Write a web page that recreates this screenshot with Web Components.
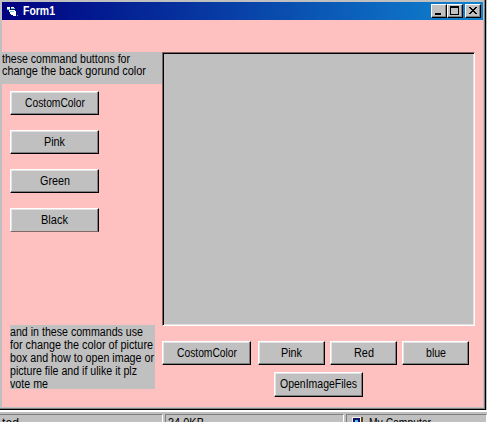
<!DOCTYPE html>
<html lang="en"><head><meta charset="utf-8"><title>Form1</title>
<style>
html,body{margin:0;width:487px;height:422px;overflow:hidden;background:#c0c0c0}
body{font:12px/13px "Liberation Sans",Arial,sans-serif;color:#000}
</style></head><body>
<form-window></form-window>
<script>
const define=(name,html,init)=>customElements.define(name,class extends HTMLElement{
  connectedCallback(){
    if(this.shadowRoot)return;
    this.attachShadow({mode:'open'}).innerHTML=html;
    if(init)init(this,this.shadowRoot);
  }
});

/* A single line of text, condensed to the width given by its w attribute. */
define('text-line',`<style>:host{display:block;white-space:nowrap}span{display:inline-block;vertical-align:top;transform-origin:0 0}</style><span><slot></slot></span>`,(el,root)=>{
  const s=root.querySelector('span'),w=+el.getAttribute('w'),n=s.getBoundingClientRect().width;
  s.style.transform='scaleX('+w/n+')';
  s.style.marginRight=w-n+'px';
});

define('command-button',`<style>
:host{display:flex;box-sizing:border-box;width:89px;height:24px;align-items:center;justify-content:center;background:#c0c0c0;
border:1px solid;border-color:#fff #000 #000 #fff;box-shadow:inset -1px -1px #808080,inset 1px 1px #e4e2e2}
:host([faded]){border-bottom-color:#806868;box-shadow:inset -1px 0 #808080,inset 1px 1px #e4e2e2}
</style><slot></slot>`);

define('caption-button',`<style>
:host{display:block;box-sizing:border-box;width:16px;height:14px;background:#c0c0c0;border:1px solid;border-color:#fff #000 #000 #fff;box-shadow:inset -1px -1px #808080}
svg{display:block}</style><svg width="14" height="12" shape-rendering="crispEdges"></svg>`,(el,root)=>{
  root.querySelector('svg').innerHTML={
    min:'<path d="M3 8h6v2H3z"/>',
    max:'<path fill-rule="evenodd" d="M2 1h9v9H2zM3 3h7v6H3z"/>',
    close:'<path d="M3 2h2v1h1v1h2V3h1V2h2v1h-1v1H9v1H8v1h1v1h1v1h1v1H9V8H8V7H6v1H5v1H3V8h1V7h1V6h1V5H5V4H4V3H3z"/>'
  }[el.getAttribute('kind')];
});

define('title-bar',`<style>
:host{display:flex;box-sizing:border-box;height:18px;align-items:center;padding:0 2px 0 4px;background:linear-gradient(90deg,#000080,#1084d0);color:#fff;font-weight:bold}
svg{margin-right:3px}.gap{margin-left:2px}caption-button:nth-of-type(1){margin-left:auto}
</style>
<svg width="14" height="14" shape-rendering="crispEdges"><path fill="#fff" d="M1 3h3v2H1zM5 3h3v1H5zM3 6h6v1h1v5H7v-1H5v-1H4V8H3z"/><path fill="#60c8dc" d="M1 5h3v1H1zM5 4h4v1H5zM4 7h4v1H4z"/><path fill="#102040" d="M2 6h1v1H2zM5 5h3v1H5z"/><path fill="#8098b0" d="M11 11h1v1h-1z"/></svg>
<text-line w="32">Form1</text-line>
<caption-button kind="min"></caption-button><caption-button kind="max"></caption-button><caption-button class="gap" kind="close"></caption-button>`);

define('label-box',`<style>:host{display:block;box-sizing:border-box;background:#c0c0c0}</style><slot></slot>`);
define('picture-box',`<style>:host{display:block;box-sizing:border-box;width:313px;height:274px;background:#c0c0c0;border:1px solid;border-color:#806060 #fff #fff #806060;box-shadow:inset 1px 1px #000,inset -1px -1px #e4dede}</style>`);

define('status-bar',`<style>
:host{display:flex;height:12px;box-sizing:border-box;border-top:2px solid #fff;padding-top:2px;gap:2px;overflow:hidden}
div{box-sizing:border-box;height:20px;border:1px solid #808080;border-right-color:#fff;padding:2px 2px 0;display:flex}
.a{width:163px;border-left:0}.b{width:179px}.c{flex:1;padding-left:5px}svg{margin:0 5px 0 0}
</style>
<div class="a"><text-line w="17">ted</text-line></div><div class="b"><text-line w="36">34.0KB</text-line></div>
<div class="c"><svg width="12" height="12" shape-rendering="crispEdges"><path fill="#f0f0e0" d="M0 0h9v12H0z"/><path fill="#101078" d="M1 1h7v7H1z"/><path fill="#50c8d8" d="M3 3h3v4H3z"/><path fill="#604818" d="M9 0h2v12H9z"/></svg><text-line w="62">My Computer</text-line></div>`);

define('form-window',`<style>
:host{display:block;width:487px;height:422px;overflow:hidden}
.window{box-sizing:border-box;width:486px;height:410px;padding:2px;border-right:1px solid #000;border-bottom:1px solid #000;background:#c0c0c0;box-shadow:inset -1px -1px #808080}
.client{display:flex;height:387px;box-sizing:border-box;background:#ffc0c0;padding-top:32px}
.left{width:160px;display:flex;flex-direction:column}
.intro{height:32px;padding:1px 0 0 0;line-height:12px}
.stack{display:grid;gap:15px;padding:7px 0 0 8px}
.note{width:145px;height:64px;margin:93px 0 0 8px;padding-top:1px}
.right{width:313px}
.row{display:flex;margin-top:15px;gap:5px}
.row .s{width:67px}
.row .s:nth-child(2){margin-left:2px}
.open{height:25px;margin:7px 0 0 112px}
</style>
<div class="window"><title-bar></title-bar><div class="client">
<div class="left">
<label-box class="intro"><text-line w="128">these command buttons for</text-line><text-line w="144">change the back gorund color</text-line></label-box>
<div class="stack">
<command-button><text-line w="60">CostomColor</text-line></command-button>
<command-button><text-line w="21">Pink</text-line></command-button>
<command-button><text-line w="30">Green</text-line></command-button>
<command-button faded><text-line w="27">Black</text-line></command-button></div>
<label-box class="note"><text-line w="133">and in these commands use</text-line><text-line w="143">for change the color of picture</text-line><text-line w="144">box and how to open image or</text-line><text-line w="127">picture file and if ulike it plz</text-line><text-line w="38">vote me</text-line></label-box>
</div>
<div class="right"><picture-box></picture-box>
<div class="row"><command-button><text-line w="60">CostomColor</text-line></command-button><command-button class="s"><text-line w="21">Pink</text-line></command-button><command-button class="s"><text-line w="20">Red</text-line></command-button><command-button class="s"><text-line w="20">blue</text-line></command-button></div>
<command-button class="open"><text-line w="77">OpenImageFiles</text-line></command-button></div>
</div></div>
<status-bar></status-bar>`);
</script></body></html>
